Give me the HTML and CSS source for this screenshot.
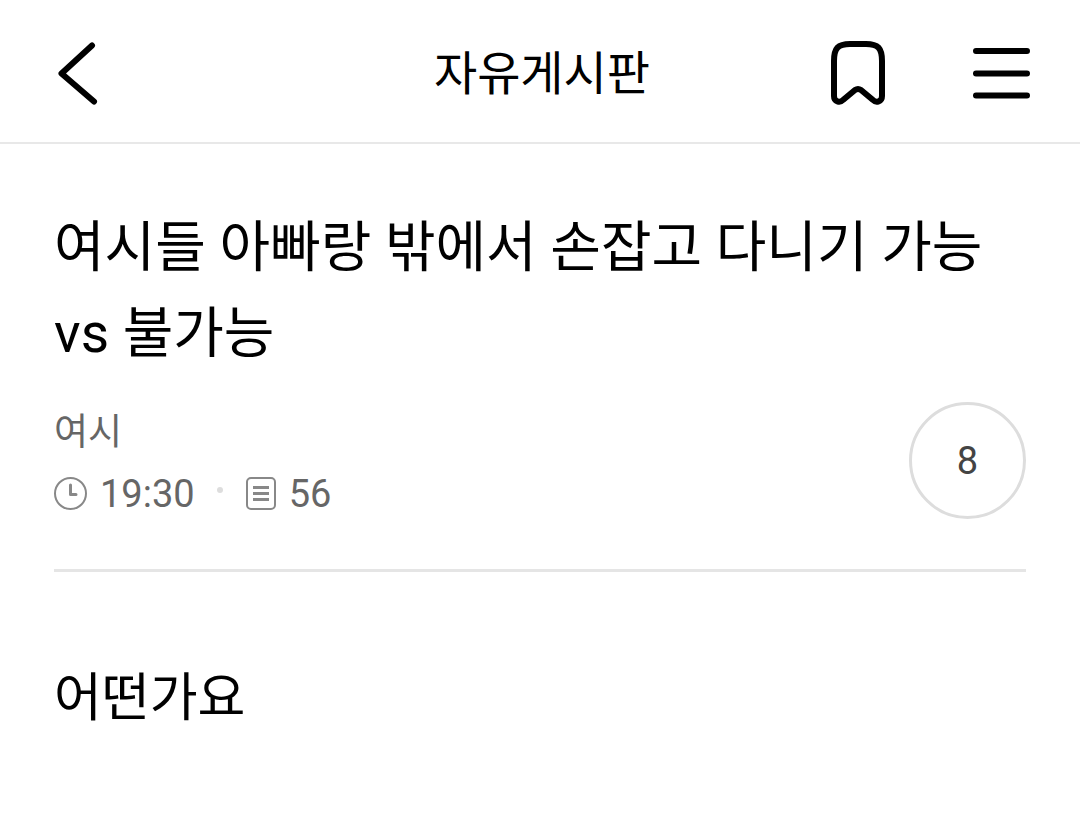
FILE: index.html
```html
<!DOCTYPE html>
<html lang="ko">
<head>
    <meta charset="UTF-8">
    <meta name="viewport" content="width=device-width, initial-scale=1.0">
    <title>자유게시판</title>
    <link rel="stylesheet" href="styles.css">
</head>
<body>
    <header class="topbar">
        <button class="icon-btn" type="button" aria-label="뒤로">
            <svg width="48" height="68" viewBox="0 0 48 68" fill="none" stroke="#000" stroke-width="6" stroke-linecap="round" stroke-linejoin="round">
                <path d="M40 8.5 9.5 36.5 42 64.5"/>
            </svg>
        </button>
        <h1 class="board-name">자유게시판</h1>
        <div class="actions">
            <button class="icon-btn" type="button" aria-label="북마크">
                <svg width="60" height="68" viewBox="0 0 60 68" fill="none" stroke="#000" stroke-width="6" stroke-linejoin="round">
                    <path d="M6 24C6 11 10 7 22 7H38C50 7 54 11 54 24V59C54 65 48 66 45 63L33 53Q30 51 27 53L15 63C12 66 6 65 6 59Z"/>
                </svg>
            </button>
            <button class="icon-btn" type="button" aria-label="메뉴">
                <svg width="60" height="68" viewBox="0 0 60 68" fill="none" stroke="#000" stroke-width="6" stroke-linecap="round">
                    <path d="M4 14H55M4 36.5H55M4 58.5H55"/>
                </svg>
            </button>
        </div>
    </header>
    <main class="post">
        <div class="post-head">
            <h2 class="title">여시들 아빠랑 밖에서 손잡고 다니기 가능 vs 불가능</h2>
            <div class="info">
                <div class="meta">
                    <span class="author">여시</span>
                    <div class="stats">
                        <svg width="34" height="34" viewBox="0 0 34 34" fill="none" stroke="#888" stroke-width="2">
                            <circle cx="16.5" cy="16.5" r="15.5"/>
                            <path d="M16.5 8V17.5H22" stroke-width="3" stroke-linecap="round" stroke-linejoin="round"/>
                        </svg>
                        <span class="time">19:30</span>
                        <span class="dot"></span>
                        <svg width="32" height="34" viewBox="0 0 32 34" fill="none" stroke="#888">
                            <rect x="2" y="1" width="28" height="31" rx="4" stroke-width="2"/>
                            <path d="M8 10.5H24M8 16.5H24M8 22.5H24" stroke-width="3"/>
                        </svg>
                        <span class="views">56</span>
                    </div>
                </div>
                <button class="comments" type="button" aria-label="댓글 8개">8</button>
            </div>
        </div>
        <p class="content">어떤가요</p>
    </main>
</body>
</html>
```
FILE: styles.css
```css
body {
    margin: 0;
    background-color: #ffffff;
    color: #000000;
    font-family: Roboto, "Noto Sans CJK KR", sans-serif;
}
svg {
    display: block;
}
button {
    padding: 0;
    border: none;
    background: none;
    font-family: inherit;
    cursor: pointer;
}
.topbar {
    display: grid;
    grid-template-columns: 1fr auto 1fr;
    align-items: center;
    height: 142px;
    padding: 0 48px 0 52px;
    border-bottom: 2px solid #e8e8e8;
}
.icon-btn {
    justify-self: start;
}
.board-name {
    margin: 0;
    padding-top: 6px;
    font-size: 47px;
    font-weight: 400;
    line-height: 68px;
}
.actions {
    display: flex;
    justify-content: flex-end;
    gap: 84px;
}
.post {
    padding: 60px 54px;
}
.post-head {
    padding-bottom: 45px;
    border-bottom: 3px solid #e5e5e5;
}
.title {
    margin: 0;
    font-size: 55px;
    font-weight: 400;
    line-height: 86px;
}
.info {
    display: flex;
    justify-content: space-between;
    align-items: flex-start;
    margin-top: 26px;
}
.meta {
    color: #666666;
    font-size: 38px;
    line-height: 60px;
}
.author {
    display: block;
    font-size: 37px;
    line-height: 62px;
}
.stats {
    display: flex;
    align-items: center;
}
.time,
.views {
    margin-left: 12px;
}
.dot {
    width: 6px;
    height: 6px;
    margin: 0 22px 8px;
    border-radius: 50%;
    background-color: #dddddd;
}
.comments {
    width: 117px;
    height: 117px;
    border: 3px solid #dddddd;
    border-radius: 50%;
    color: #444444;
    font-size: 38px;
}
.content {
    margin: 84px 0 0;
    font-size: 52px;
    line-height: 86px;
}
```
